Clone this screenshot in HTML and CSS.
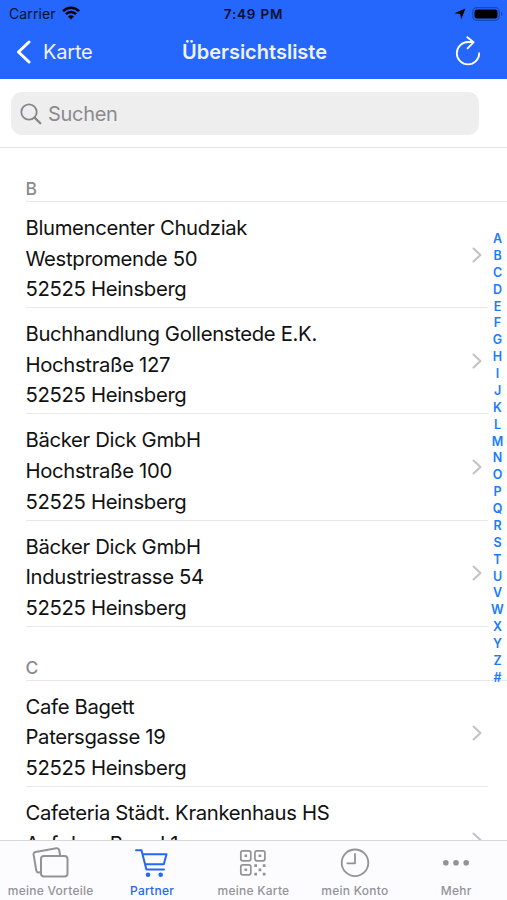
FILE: index.html
```html
<!DOCTYPE html>
<html lang="de">
<head>
    <meta charset="UTF-8">
    <meta name="viewport" content="width=device-width, initial-scale=1.0">
    <title>Übersichtsliste</title>
    <link rel="stylesheet" href="styles.css">
</head>
<body>
    <div class="app">
        <header>
            <div class="status">
                <div class="carrier">
                    <span>Carrier</span>
                    <svg width="18" height="14" viewBox="0 0 18 14" fill="none" stroke="#000" stroke-width="2.5">
                        <path d="M1 5.2C5.4 .6 12.6 .6 17 5.2M3.9 8.2C6.8 5.3 11.2 5.3 14.1 8.2"/>
                        <path d="M6 10.5C7.7 8.9 10.3 8.9 12 10.5L9 13.5Z" fill="#000" stroke="none"/>
                    </svg>
                </div>
                <span class="time">7:49 PM</span>
                <div class="battery">
                    <svg width="12" height="12" viewBox="0 0 12 12"><path d="M11.5 .5L7.2 11.3L6.2 6L.4 5.3Z" fill="#000"/></svg>
                    <svg width="31" height="14" viewBox="0 0 31 14">
                        <rect x=".7" y=".7" width="26.6" height="12.6" rx="4" fill="none" stroke="#1749bd" stroke-width="1.2"/>
                        <rect x="2.5" y="2.5" width="23" height="9" rx="2.2" fill="#000"/>
                        <path d="M29 5v4q1.6-.5 1.6-2T29 5z" fill="#1749bd"/>
                    </svg>
                </div>
            </div>
            <nav>
                <a href="#" class="back">
                    <svg width="16" height="24" viewBox="0 0 16 24" fill="none" stroke="#fff" stroke-width="3" stroke-linecap="round" stroke-linejoin="round"><path d="M13 2L2.5 12L13 22"/></svg>
                    <span>Karte</span>
                </a>
                <h1>Übersichtsliste</h1>
                <a href="#" class="reload">
                    <svg width="26" height="30" viewBox="0 0 26 30" fill="none" stroke="#fff" stroke-width="1.8" stroke-linecap="round" stroke-linejoin="round"><path d="M24.2 17.2A11.2 11.2 0 1 1 13 6H18.4M12.3 1.2L18.6 6.2L12.6 12.4"/></svg>
                </a>
            </nav>
        </header>
        <div class="search">
            <div class="search-field">
                <svg width="22" height="22" viewBox="0 0 22 22" fill="none" stroke="#85858a" stroke-width="1.8" stroke-linecap="round"><circle cx="9" cy="9" r="7.7"/><path d="M14.6 14.6L20.3 20.3" stroke-width="2.2"/></svg>
                <span>Suchen</span>
            </div>
        </div>
        <main>
            <h2>B</h2>
            <ul>
                <li><p>Blumencenter Chudziak<br>Westpromende 50<br>52525 Heinsberg</p><svg class="arrow" viewBox="0 0 10 16"><path d="M1.5 1.5L8.5 8L1.5 14.5"/></svg></li>
                <li><p>Buchhandlung Gollenstede E.K.<br>Hochstraße 127<br>52525 Heinsberg</p><svg class="arrow" viewBox="0 0 10 16"><path d="M1.5 1.5L8.5 8L1.5 14.5"/></svg></li>
                <li><p>Bäcker Dick GmbH<br>Hochstraße 100<br>52525 Heinsberg</p><svg class="arrow" viewBox="0 0 10 16"><path d="M1.5 1.5L8.5 8L1.5 14.5"/></svg></li>
                <li><p>Bäcker Dick GmbH<br>Industriestrasse 54<br>52525 Heinsberg</p><svg class="arrow" viewBox="0 0 10 16"><path d="M1.5 1.5L8.5 8L1.5 14.5"/></svg></li>
            </ul>
            <h2>C</h2>
            <ul>
                <li><p>Cafe Bagett<br>Patersgasse 19<br>52525 Heinsberg</p><svg class="arrow" viewBox="0 0 10 16"><path d="M1.5 1.5L8.5 8L1.5 14.5"/></svg></li>
                <li><p>Cafeteria Städt. Krankenhaus HS<br>Auf dem Brand 1</p><svg class="arrow" viewBox="0 0 10 16"><path d="M1.5 1.5L8.5 8L1.5 14.5"/></svg></li>
            </ul>
            <!-- Alphabet index on top of the list -->
            <div class="index">
                <span>A</span><span>B</span><span>C</span><span>D</span><span>E</span><span>F</span><span>G</span><span>H</span><span>I</span>
                <span>J</span><span>K</span><span>L</span><span>M</span><span>N</span><span>O</span><span>P</span><span>Q</span><span>R</span>
                <span>S</span><span>T</span><span>U</span><span>V</span><span>W</span><span>X</span><span>Y</span><span>Z</span><span>#</span>
            </div>
        </main>
        <footer>
            <a href="#" class="tab">
                <svg width="38" height="32" viewBox="0 0 38 32" stroke-width="2">
                    <path d="M8.5 25.2L6.4 25.5Q4.7 25.5 4.3 23.6L1.6 7.7Q1.3 5.5 3.4 5L24.4 1.3Q26.7 1 27.2 3L28 8"/>
                    <rect x="9" y="9" width="26.5" height="20.5" rx="3"/>
                </svg>
                <span>meine Vorteile</span>
            </a>
            <a href="#" class="tab active">
                <svg width="38" height="32" viewBox="0 0 38 32" stroke-width="2">
                    <path d="M3 3.2H8.5L13.4 22.6H31M9.5 7.2H33.5L30.8 17.3H12"/>
                    <circle cx="15" cy="27.8" r="2.3" class="solid"/><circle cx="27.7" cy="27.8" r="2.3" class="solid"/>
                </svg>
                <span>Partner</span>
            </a>
            <a href="#" class="tab">
                <svg width="38" height="32" viewBox="0 0 38 32" stroke-width="1.7">
                    <rect x="6.8" y="3.8" width="10" height="10" rx="2"/><rect x="20.9" y="3.8" width="10" height="10" rx="2"/><rect x="6.8" y="17.8" width="10" height="10" rx="2"/>
                    <path class="solid" d="M10.5 7.5h2.6v2.6h-2.6zM24.6 7.5h2.6v2.6h-2.6zM10.5 21.5h2.6v2.6h-2.6zM20.3 17.2h2.7v2.7h-2.7zM28.8 17.2h2.7v2.7h-2.7zM24.6 21.5h2.7v2.7h-2.7zM20.3 25.8h2.7v2.7h-2.7zM28.8 25.8h2.7v2.7h-2.7z"/>
                </svg>
                <span>meine Karte</span>
            </a>
            <a href="#" class="tab">
                <svg width="38" height="32" viewBox="0 0 38 32" stroke-width="1.8">
                    <circle cx="19" cy="15.8" r="13.3"/><path d="M19 7V16.3H11.3"/>
                </svg>
                <span>mein Konto</span>
            </a>
            <a href="#" class="tab">
                <svg width="38" height="32" viewBox="0 0 38 32">
                    <circle cx="8.8" cy="15.8" r="2.8" class="solid"/><circle cx="19" cy="15.8" r="2.8" class="solid"/><circle cx="29.2" cy="15.8" r="2.8" class="solid"/>
                </svg>
                <span>Mehr</span>
            </a>
        </footer>
    </div>
</body>
</html>
```
FILE: styles.css
```css
*{
    box-sizing: border-box;
}
body{
    margin: 0;
    font-family: Inter, "Liberation Sans", sans-serif;
    background: white;
    color: #111;
}
a{
    color: inherit;
    text-decoration: none;
}
svg{
    display: block;
    flex-shrink: 0;
}
.app{
    display: flex;
    flex-direction: column;
    height: 900px;
    overflow: hidden;
}
header{
    height: 79px;
    flex-shrink: 0;
    background: #2566fd;
}
/* Status bar */
.status{
    display: grid;
    grid-template-columns: 1fr auto 1fr;
    align-items: center;
    height: 27px;
    padding: 0 4px 0 9px;
    font-size: 14px;
    color: #04102c;
}
.carrier{
    display: flex;
    align-items: center;
    gap: 6px;
    letter-spacing: 0.1px;
}
.carrier svg{
    margin-top: -2px;
}
.time{
    font-size: 13.5px;
    font-weight: 600;
    letter-spacing: 0.8px;
    margin-left: -5px;
}
.battery{
    display: flex;
    align-items: center;
    justify-content: flex-end;
    gap: 6px;
}
/* Navigation bar */
nav{
    display: grid;
    grid-template-columns: 1fr auto 1fr;
    align-items: center;
    height: 50px;
    padding: 0 26px 0 16px;
    color: #eef3ff;
}
.back{
    display: flex;
    align-items: center;
    gap: 11px;
    font-size: 20px;
    letter-spacing: -0.2px;
}
h1{
    margin: 0 0 0 12px;
    font-size: 20px;
    font-weight: 600;
    letter-spacing: 0;
}
.reload{
    justify-self: end;
    margin-top: -2px;
}
/* Search */
.search{
    height: 69px;
    flex-shrink: 0;
    padding: 13px 28px 0 11px;
    border-bottom: 1px solid #e4e4e5;
}
.search-field{
    display: flex;
    align-items: center;
    gap: 6px;
    height: 43px;
    padding-left: 9px;
    border-radius: 11px;
    background: #eeeeee;
    color: #8a8a8e;
    font-size: 20px;
    letter-spacing: -0.3px;
}
/* List */
main{
    position: relative;
    flex: 1;
    min-height: 0;
    overflow: hidden;
    padding-left: 25.5px;
}
h2{
    height: 54px;
    margin: 0;
    padding-top: 30px;
    border-bottom: 1px solid #e8e8e9;
    font-size: 17.5px;
    line-height: 22px;
    font-weight: 500;
    color: #8a8a8e;
}
ul{
    list-style: none;
    margin: 0;
    padding: 0;
}
li{
    display: flex;
    align-items: center;
    justify-content: space-between;
    height: 106.2px;
    margin-right: 19px;
    padding-right: 6px;
    border-bottom: 1px solid #e8e8e9;
}
li p{
    align-self: flex-start;
    margin: 11px 0 0;
    font-size: 20.3px;
    line-height: 30.6px;
    letter-spacing: -0.33px;
    white-space: nowrap;
}
.arrow{
    width: 10px;
    height: 16px;
    fill: none;
    stroke: #c2c2c5;
    stroke-width: 2;
    stroke-linecap: round;
    stroke-linejoin: round;
}
.index{
    position: absolute;
    top: 83px;
    right: 0;
    width: 19px;
    display: flex;
    flex-direction: column;
    align-items: center;
    font-size: 12.5px;
    font-weight: 600;
    line-height: 16.88px;
    color: #1a7cff;
}
/* Tab bar */
footer{
    display: grid;
    grid-template-columns: repeat(5, 1fr);
    height: 60px;
    flex-shrink: 0;
    border-top: 1px solid #d8d8db;
    background: #fcfcff;
}
.tab{
    display: flex;
    flex-direction: column;
    align-items: center;
    padding-top: 6px;
    color: #939397;
    font-size: 12px;
    line-height: 15px;
    font-weight: 500;
    letter-spacing: 0.25px;
    white-space: nowrap;
}
.tab svg{
    fill: none;
    stroke: currentColor;
    stroke-linecap: round;
    stroke-linejoin: round;
}
.tab span{
    margin-top: 4px;
}
.tab .solid{
    fill: currentColor;
    stroke: none;
}
.active{
    color: #2566f4;
}
```
